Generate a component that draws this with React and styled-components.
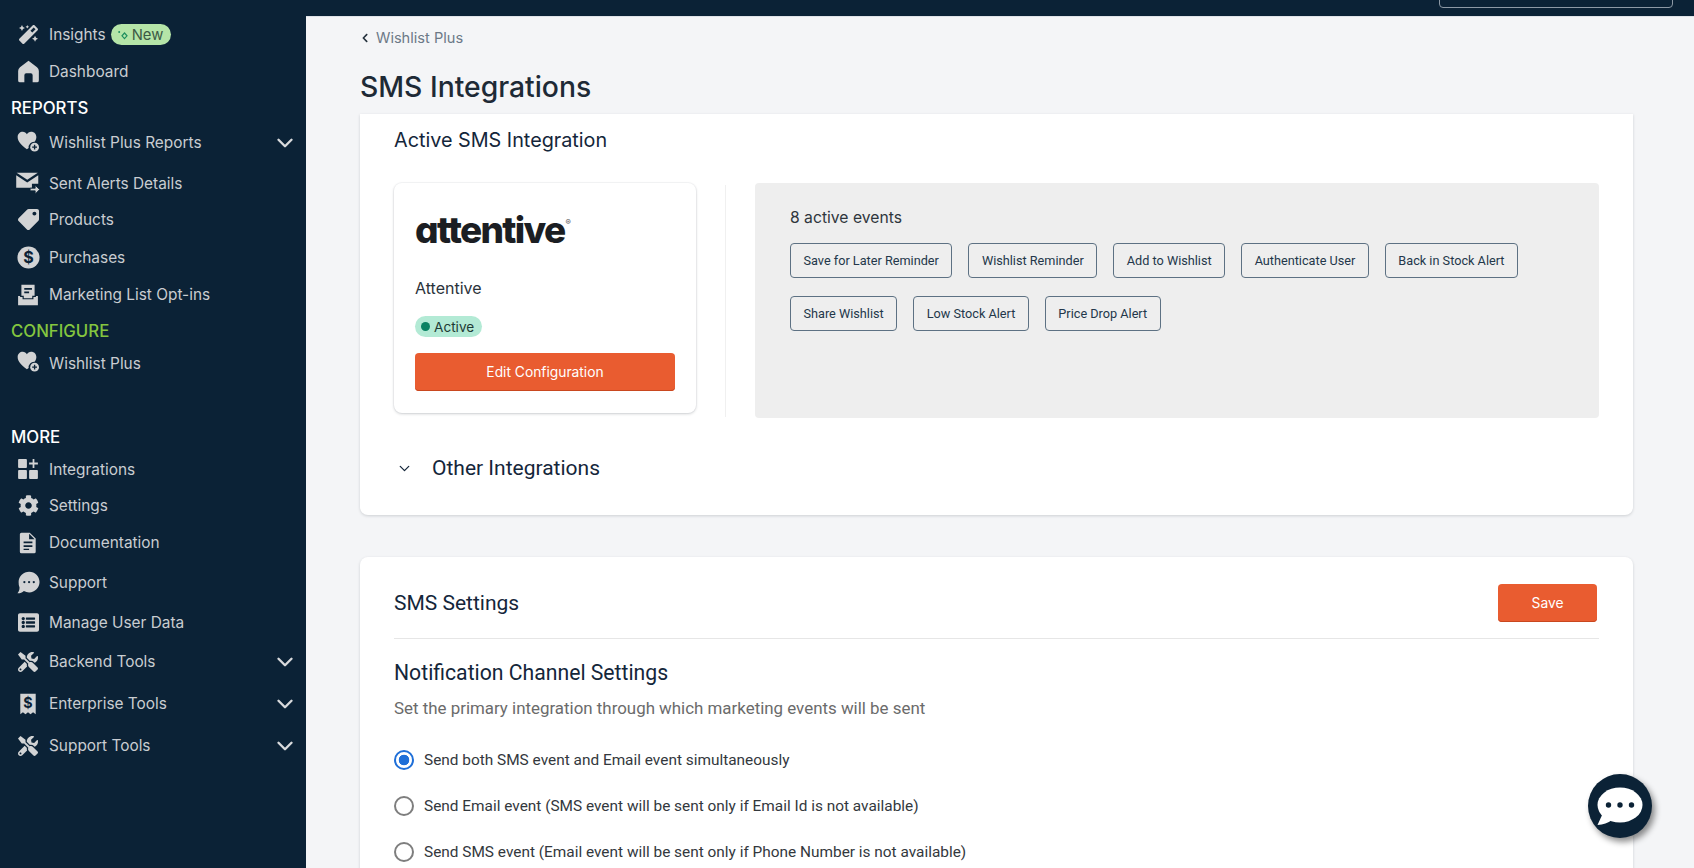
import React from "react";
import styled, { createGlobalStyle } from "styled-components";
import { FaMagic, FaCog, FaListAlt, FaTools, FaTag, FaChevronLeft } from "react-icons/fa";
import { ChevronDown } from "lucide-react";

const Global = createGlobalStyle`
  html, body { margin: 0; padding: 0; height: 868px; overflow: hidden; background: #f4f5f7; }
  * { box-sizing: border-box; }
  body { font-family: "Inter", "Liberation Sans", sans-serif; }
`;

const Page = styled.div`display:flex;flex-direction:column;height:868px;overflow:hidden;`;
const TopBar = styled.header`
  height:16px;flex:none;background:#0b2236;
  display:flex;justify-content:flex-end;align-items:flex-end;padding:0 21px 8px 0;
`;
const SearchBox = styled.div`
  width:234px;height:30px;flex:none;border:1px solid #8d99a5;border-radius:4px;
`;
const Body = styled.div`display:flex;flex:1;min-height:0;`;
const Sidebar = styled.nav`
  width:306px;flex:none;background:#0b2236;
  display:flex;flex-direction:column;
`;
const NavRow = styled.div`
  display:flex;align-items:center;flex:none;height:${p=>p.$h||37}px;margin-top:${p=>p.$top||0}px;
  padding:0 8px 0 17px;color:#c9cdd1;font-size:15.4px;
`;
const NavIcon = styled.span`
  width:22px;height:22px;flex:none;margin-right:10px;display:flex;align-items:center;justify-content:center;
  color:#d2d3d4;transform:translateY(${p=>p.$dy||0}px);
  svg{display:block;flex:none;}
`;
const NavLabel = styled.span`white-space:nowrap;`;
const NavChevron = styled.span`margin-left:auto;color:#d8dadc;display:flex;`;
const NewBadge = styled.span`
  display:inline-flex;align-items:center;gap:3px;height:21px;margin-left:5px;padding:0 8px 0 6px;border-radius:11px;
  background:#b5e5a8;color:#3c5a45;font-size:14.8px;
`;
const NavHeading = styled.div`
  flex:none;height:${p=>p.$h||32}px;margin-top:${p=>p.$top||0}px;padding-left:11px;display:flex;align-items:center;
  color:${p=>p.$green?"#84c63f":"#fff"};font-size:16.8px;font-weight:500;
`;

const Main = styled.main`
  flex:1;min-width:0;padding:0 61px 0 54px;background:#f4f5f7;display:flex;flex-direction:column;
  border-top:1px solid #dfe3e8;
`;
const Crumb = styled.div`
  flex:none;height:41px;display:flex;align-items:center;gap:6px;color:#6c7987;font-size:14.6px;
  svg{color:#25323e;}
`;
const Title = styled.h1`
  flex:none;margin:0;height:56px;padding-top:7px;font-size:28.3px;line-height:44px;font-weight:500;color:#1e2a36;
`;
const Card = styled.section`
  background:#fff;box-shadow:0 1px 3px rgba(30,40,50,.18);flex:none;
  border-radius:${p=>p.$flatTop?"0 0 8px 8px":"8px 8px 0 0"};
  padding:0 34px;
  height:${p=>p.$height}px;
  margin-top:${p=>p.$mt||0}px;
`;
const SectionTitle = styled.h2`
  margin:0;font-family:"Inter",sans-serif;font-size:19.8px;font-weight:400;color:#14263a;line-height:52px;height:52px;
`;
const Columns = styled.div`display:flex;margin-top:17px;`;
const VendorCard = styled.div`
  width:302px;height:230px;flex:none;border-radius:8px;background:#fff;padding:26px 21px 0;
  box-shadow:0 0 0 1px rgba(30,40,50,.03),0 1px 3px rgba(30,40,50,.2);display:flex;flex-direction:column;
`;
const Logo = styled.div`
  height:42px;font-family:"Inter",sans-serif;font-weight:800;font-size:37px;line-height:42px;letter-spacing:-1.7px;
  color:#1b1e23;font-feature-settings:"cv11" 1;white-space:nowrap;
  sup{font-size:8px;font-weight:400;letter-spacing:0;vertical-align:18px;line-height:0;color:#555;margin-left:1px;}
`;
const VendorName = styled.div`margin-top:25px;font-size:16px;line-height:24px;color:#2b333b;`;
const ActiveBadge = styled.div`
  margin-top:16px;align-self:flex-start;height:21px;width:67px;border-radius:11px;background:#b3ead5;
  display:flex;align-items:center;gap:4px;padding-left:6px;font-size:13.6px;color:#1e3a34;flex:none;
  &::before{content:"";width:9px;height:9px;border-radius:50%;background:#0a8263;}
`;
const Primary = styled.button`
  border:0;border-radius:4px;background:#e95c30;color:#fff;font-family:"Inter",sans-serif;font-size:13.8px;
  height:${p=>p.$h}px;width:${p=>p.$w?p.$w+"px":"100%"};flex:none;
  margin-top:${p=>p.$mt||0}px;margin-right:${p=>p.$mr||0}px;
  box-shadow:inset 0 -1px 0 #c9471f;
`;
const VDivider = styled.div`width:1px;height:232px;margin:2px 29px 0 29px;background:#f0f0f0;flex:none;`;
const EventsPanel = styled.div`
  flex:1;height:235px;background:#eee;border-radius:4px;padding:22px 33px 0 35px;
`;
const EventsTitle = styled.div`font-size:15.7px;line-height:26px;color:#2f363d;`;
const Chips = styled.div`display:flex;flex-wrap:wrap;gap:18px 16px;margin-top:12px;`;
const Chip = styled.div`
  height:35px;padding:0 12.5px;display:flex;align-items:center;border:1px solid #5d7183;border-radius:4px;
  font-family:"Roboto",sans-serif;font-size:12.7px;color:#23374a;white-space:nowrap;
`;
const Accordion = styled.div`display:flex;align-items:center;height:48px;margin-top:26px;color:#14263a;gap:19px;padding-left:2px;`;
const AccordionTitle = styled.span`font-family:"Roboto",sans-serif;font-size:21px;`;
const SettingsHead = styled.div`
  display:flex;align-items:center;justify-content:space-between;height:82px;padding-top:11px;border-bottom:1px solid #e6e6e6;
`;
const H2 = styled.h2`margin:0;font-family:"Roboto",sans-serif;font-weight:400;font-size:21px;color:#14263a;`;
const H3 = styled.h3`margin:18px 0 0;font-family:"Roboto",sans-serif;font-weight:400;font-size:21.2px;line-height:32px;color:#14263a;`;
const Sub = styled.p`margin:7px 0 0;font-family:"Roboto",sans-serif;font-size:16.9px;line-height:24px;color:#6b6b6b;`;
const Radios = styled.div`margin-top:28.5px;display:flex;flex-direction:column;gap:24.3px;`;
const RadioRow = styled.label`
  display:flex;align-items:center;gap:10px;height:22px;font-family:"Roboto",sans-serif;font-size:15.4px;color:#33383d;
`;
const Radio = styled.input.attrs({type:"radio",name:"channel"})`
  appearance:none;margin:0;width:20px;height:20px;border-radius:50%;border:2px solid #7e7e7e;background:#fff;flex:none;
  &:checked{border-color:#1f6fd8;background:radial-gradient(circle,#1f6fd8 0 5px,#fff 5.6px);}
`;
const Fab = styled.button`
  position:fixed;left:1588px;top:774px;width:64px;height:64px;border:0;border-radius:50%;background:#0b2236;padding:0;
  box-shadow:3px 4px 6px rgba(0,0,0,.45);display:flex;align-items:center;justify-content:center;
`;

const DARK = "#0b2236";
const I = ({children,w=22,h=22,vb="0 0 20 20"}) => <svg width={w} height={h} viewBox={vb} fill="currentColor">{children}</svg>;
const Home = () => <I w={23} h={23}><path fillRule="evenodd" d="M10 .6 L17.4 6.4 Q19 7.8 19 9.6 V17.8 Q19 19.4 17.4 19.4 H13.6 V13.2 Q13.6 11.6 12 11.6 H8 Q6.4 11.6 6.4 13.2 V19.4 H2.6 Q1 19.4 1 17.8 V9.6 Q1 7.8 2.6 6.4 Z"/></I>;
const HeartPlus = () => <I><path d="M9 17.5 C4 13.6 .6 10.6 .6 6.4 C.6 3.4 2.8 1.6 5.2 1.6 C6.9 1.6 8.2 2.5 9 3.8 C9.8 2.5 11.1 1.6 12.8 1.6 C15.6 1.6 17.6 3.6 17.6 6.4 C17.6 8 17 9.5 16 10.7 A5 5 0 0 0 10.6 16.3 Z"/><circle cx="16" cy="15.6" r="4"/><path d="M15.4 13.4h1.2v1.6h1.6v1.2h-1.6v1.6h-1.2v-1.6h-1.6v-1.2h1.6z" fill={DARK}/></I>;
const SentMail = () => <I w={24} h={24} vb="0 0 22 22"><path d="M.6 1.6 H20 L10.3 8 Z"/><path d="M.2 4 L10.3 10.6 L20.4 4 V11.6 H14.6 V15.4 H.2 Z"/><path d="M13 15.8 H17.6 V13 L21.6 17 L17.6 21 V18.2 H13 Z" stroke={DARK} strokeWidth=".7"/></I>;
const Dollar = () => <I w={23} h={23}><circle cx="10" cy="10" r="9.6"/><text x="10" y="15" textAnchor="middle" fontFamily="Inter, sans-serif" fontWeight="700" fontSize="14" fill={DARK}>$</text></I>;
const Inbox = () => <I><path d="M4 .6 H16 V11 H19 V19.4 H1 V11 H4 Z"/><path d="M6.6 3.6 H13.6 V5.2 H6.6 Z M6.6 6.8 H11 V8.4 H6.6 Z" fill={DARK}/><path d="M2.8 11.2 H5.6 V13.4 H14.4 V11.2 H17.2" stroke={DARK} strokeWidth="1.1" fill="none"/></I>;
const Grid = () => <I><rect x="1" y="1" width="8" height="8" rx=".8"/><rect x="1" y="11" width="8" height="8" rx=".8"/><rect x="11" y="11" width="8" height="8" rx=".8"/><path d="M14.2 1h1.6v3.2H19v1.6h-3.2V9h-1.6V5.8H11V4.2h3.2z"/></I>;
const Doc = () => <I><path fillRule="evenodd" d="M4 0.6 H11.6 L17 6 V18 Q17 19.4 15.6 19.4 H4 Q2.6 19.4 2.6 18 V2 Q2.6 .6 4 .6 Z M6 8.6 V10.2 H14 V8.6 Z M6 12 V13.6 H14 V12 Z M6 15.2 V16.4 H11 V15.2 Z M11 1.6 V6.6 H16 Z"/></I>;
const Bubble = () => <I w={23} h={23}><path fillRule="evenodd" d="M10.6 .6 C15.6 .6 19.6 4.6 19.6 9.6 C19.6 14.6 15.6 18.6 10.6 18.6 C9 18.6 7.4 18.2 6 17.4 C4.4 19 2.2 19.6 .4 19.4 C1.6 18.2 2.2 16.4 2.2 14.4 C1.6 13 1.4 11.4 1.4 9.6 C1.4 4.6 5.6 .6 10.6 .6 Z M6.4 8.6 a1 1 0 1 0 .01 0 Z M10.5 8.6 a1 1 0 1 0 .01 0 Z M14.6 8.6 a1 1 0 1 0 .01 0 Z"/></I>;
const Receipt = () => <I><path d="M3 .6 H17 V19.4 L14.6 17.6 L12.3 19.4 L10 17.6 L7.7 19.4 L5.4 17.6 L3 19.4 Z"/><text x="10" y="14" textAnchor="middle" fontFamily="Inter, sans-serif" fontWeight="700" fontSize="13" fill={DARK}>$</text></I>;
const Sparkle = () => <svg width="12" height="12" viewBox="0 0 12 12" fill="none" stroke="#1f8f5f" strokeWidth="1.2"><path d="M7.5 4 L10 6.8 L7.5 9.6 L5 6.8 Z"/><circle cx="2.2" cy="3" r="1" fill="#1f8f5f" stroke="none"/></svg>;

const Nav = ({icon,label,chev,h,top,dy,badge}) => (
  <NavRow $h={h} $top={top}>
    <NavIcon $dy={dy}>{icon}</NavIcon>
    <NavLabel>{label}</NavLabel>
    {badge && <NewBadge><Sparkle/>New</NewBadge>}
    {chev && <NavChevron><ChevronDown size={26} strokeWidth={2.2}/></NavChevron>}
  </NavRow>
);

const events = ["Save for Later Reminder","Wishlist Reminder","Add to Wishlist","Authenticate User","Back in Stock Alert","Share Wishlist","Low Stock Alert","Price Drop Alert"];

export default function App(){
  return (
    <Page>
      <Global/>
      <TopBar><SearchBox/></TopBar>
      <Body>
        <Sidebar>
          <Nav icon={<FaMagic size={19}/>} label="Insights" badge/>
          <Nav icon={<Home/>} label="Dashboard"/>
          <NavHeading $h={36}>REPORTS</NavHeading>
          <Nav icon={<HeartPlus/>} label="Wishlist Plus Reports" chev h={33} dy={-2}/>
          <Nav icon={<SentMail/>} label="Sent Alerts Details" top={6} h={36}/>
          <Nav icon={<FaTag size={21} style={{transform:"rotate(90deg)"}}/>} label="Products"/>
          <Nav icon={<Dollar/>} label="Purchases" top={1}/>
          <Nav icon={<Inbox/>} label="Marketing List Opt-ins"/>
          <NavHeading $green $top={2}>CONFIGURE</NavHeading>
          <Nav icon={<HeartPlus/>} label="Wishlist Plus" h={32} dy={-2}/>
          <NavHeading $top={42}>MORE</NavHeading>
          <Nav icon={<Grid/>} label="Integrations" h={32}/>
          <Nav icon={<FaCog size={21}/>} label="Settings" top={2}/>
          <Nav icon={<Doc/>} label="Documentation"/>
          <Nav icon={<Bubble/>} label="Support" top={3}/>
          <Nav icon={<FaListAlt size={21}/>} label="Manage User Data" top={3}/>
          <Nav icon={<FaTools size={20}/>} label="Backend Tools" chev top={2}/>
          <Nav icon={<Receipt/>} label="Enterprise Tools" chev top={5}/>
          <Nav icon={<FaTools size={20}/>} label="Support Tools" chev top={5}/>
        </Sidebar>
        <Main>
          <Crumb><FaChevronLeft size={10}/>Wishlist Plus</Crumb>
          <Title>SMS Integrations</Title>
          <Card $flatTop $height={401}>
            <SectionTitle>Active SMS Integration</SectionTitle>
            <Columns>
              <VendorCard>
                <Logo>attentive<sup>®</sup></Logo>
                <VendorName>Attentive</VendorName>
                <ActiveBadge>Active</ActiveBadge>
                <Primary $h={38} $mt={16}>Edit Configuration</Primary>
              </VendorCard>
              <VDivider/>
              <EventsPanel>
                <EventsTitle>8 active events</EventsTitle>
                <Chips>{events.map(e=><Chip key={e}>{e}</Chip>)}</Chips>
              </EventsPanel>
            </Columns>
            <Accordion>
              <ChevronDown size={17} strokeWidth={1.8}/>
              <AccordionTitle>Other Integrations</AccordionTitle>
            </Accordion>
          </Card>
          <Card $height={400} $mt={42}>
            <SettingsHead>
              <H2>SMS Settings</H2>
              <Primary $h={38} $w={99} $mr={2}>Save</Primary>
            </SettingsHead>
            <H3>Notification Channel Settings</H3>
            <Sub>Set the primary integration through which marketing events will be sent</Sub>
            <Radios>
              <RadioRow><Radio defaultChecked/>Send both SMS event and Email event simultaneously</RadioRow>
              <RadioRow><Radio/>Send Email event (SMS event will be sent only if Email Id is not available)</RadioRow>
              <RadioRow><Radio/>Send SMS event (Email event will be sent only if Phone Number is not available)</RadioRow>
            </Radios>
          </Card>
        </Main>
      </Body>
      <Fab aria-label="Chat">
        <svg width="46" height="40" viewBox="0 0 46 40"><ellipse cx="23" cy="19" rx="22.5" ry="17.5" fill="#fff"/><path d="M6 27 L.5 39 Q9 38.5 15 34 Z" fill="#fff"/><circle cx="11.5" cy="19" r="2.7" fill={DARK}/><circle cx="23" cy="19" r="2.7" fill={DARK}/><circle cx="34.5" cy="19" r="2.7" fill={DARK}/></svg>
      </Fab>
    </Page>
  );
}
